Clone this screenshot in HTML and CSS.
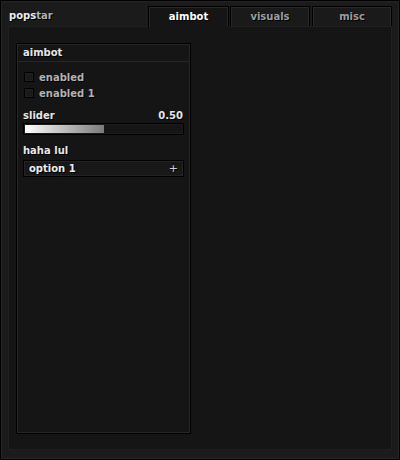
FILE: index.html
```html
<!DOCTYPE html>
<html>
<head>
<meta charset="utf-8">
<link rel="stylesheet" href="styles.css">
</head>
<body>
<div class="frame">
  <div class="topbar">
    <div class="title">pops<span class="dim">tar</span></div>
    <div class="tabs">
      <div class="tab active">aimbot</div>
      <div class="tab t2">visuals</div>
      <div class="tab t3">misc</div>
    </div>
  </div>
  <div class="panel">
    <div class="group">
      <div class="group-head">aimbot</div>
      <div class="group-body">
        <div class="check"><span class="box"></span><span class="clabel">enabled</span></div>
        <div class="check"><span class="box"></span><span class="clabel">enabled 1</span></div>
        <div class="slabel"><span>slider</span><span>0.50</span></div>
        <div class="slider"><div class="fill" style="width:50%"></div></div>
        <div class="dlabel">haha lul</div>
        <div class="dropdown"><span>option 1</span><span class="plus">+</span></div>
      </div>
    </div>
  </div>
</div>
</body>
</html>
```
FILE: styles.css
```css
* { box-sizing: border-box; }
html, body { margin: 0; padding: 0; background: #1b1b1b; }
body {
  font-family: "DejaVu Sans", Verdana, sans-serif;
  font-weight: bold;
  font-size: 10px;
  text-shadow: 1px 1px 0 #000;
}
.frame {
  width: 400px;
  height: 460px;
  border: 1px solid #000;
  box-shadow: inset 0 0 0 1px #242424;
  background: #1b1b1b;
  padding: 5px 7px 9px 7px;
  display: flex;
  flex-direction: column;
}
.topbar {
  display: flex;
  height: 20px;
  align-items: stretch;
}
.title {
  flex: 1;
  color: #ececec;
  line-height: 18px;
  padding-left: 1px;
  padding-top: 1px;
}
.title .dim { color: #b0b0b0; }
.tabs { display: flex; }
.tab {
  width: 80px;
  height: 20px;
  border: 1px solid #000;
  border-bottom: none;
  box-shadow: inset 1px 1px 0 #282828, inset -1px 0 0 #282828;
  background: #1a1a1a;
  color: #9c9c9c;
  text-align: center;
  line-height: 20px;
}
.tab.active {
  width: 81px;
  height: 21px;
  margin-bottom: -1px;
  background: #151515;
  color: #ffffff;
  position: relative;
  z-index: 1;
}
.tab.t2 { margin-left: 1px; }
.tab.t3 { margin-left: 2px; }
.panel {
  flex: 1;
  background: #151515;
  border: 1px solid #202020;
  padding: 16px 7px 15px 7px;
}
.group {
  width: 175px;
  height: 391px;
  border: 1px solid #000;
  box-shadow: inset 0 0 0 1px #262626;
  background: #151515;
}
.group-head {
  height: 18px;
  border-bottom: 1px solid #262626;
  color: #e6e6e6;
  padding-left: 6px;
  line-height: 18px;
}
.group-body {
  padding: 7px 6px 0 6px;
}
.check {
  display: flex;
  align-items: center;
  height: 16px;
}
.box {
  width: 10px;
  height: 10px;
  margin-left: 1px;
  background: #1a1a1a;
  border: 1px solid #000;
  box-shadow: inset 0 0 0 1px #202020;
}
.clabel {
  color: #b2b2b2;
  margin-left: 5px;
}
.slabel {
  display: flex;
  justify-content: space-between;
  color: #e6e6e6;
  height: 14px;
  line-height: 14px;
  margin-top: 8px;
  padding-right: 1px;
}
.slider {
  height: 12px;
  border: 1px solid #000;
  box-shadow: inset 0 0 0 1px #1c1c1c;
  background: #151515;
  padding: 1px;
}
.fill {
  height: 8px;
  background: linear-gradient(to right, #ffffff, #7a7a7a);
}
.dlabel {
  color: #e6e6e6;
  height: 14px;
  line-height: 14px;
  margin-top: 9px;
}
.dropdown {
  margin-top: 2px;
  height: 17px;
  border: 1px solid #000;
  box-shadow: inset 0 0 0 1px #232323;
  background: #181818;
  color: #ececec;
  display: flex;
  justify-content: space-between;
  align-items: center;
  padding: 0 5px 0 5px;
}
.plus { color: #d0d0d0; font-weight: normal; font-size: 11px; }
```
